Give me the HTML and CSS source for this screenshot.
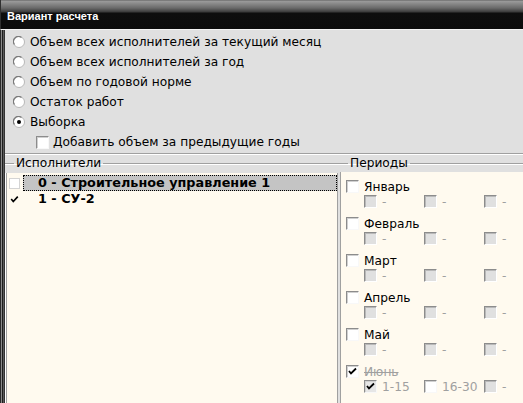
FILE: index.html
```
<!DOCTYPE html>
<html>
<head>
<meta charset="utf-8">
<link rel="stylesheet" href="styles.css">
</head>
<body>
<div class="win">
  <div class="titlebar"><span class="title">Вариант расчета</span></div>
  <div class="frame">
    <div class="edge"></div>
    <div class="client">
      <div class="options">
        <div class="opt"><svg class="radio" viewBox="0 0 12 12"><circle cx="6" cy="6" r="5.5" fill="#fff" stroke="#b8b8b8"/><path d="M1.5 8.5 A5 5 0 0 1 8.5 1.5" fill="none" stroke="#7a7a7a" stroke-width="1.2"/></svg><span>Объем всех исполнителей за текущий месяц</span></div>
        <div class="opt"><svg class="radio" viewBox="0 0 12 12"><circle cx="6" cy="6" r="5.5" fill="#fff" stroke="#b8b8b8"/><path d="M1.5 8.5 A5 5 0 0 1 8.5 1.5" fill="none" stroke="#7a7a7a" stroke-width="1.2"/></svg><span>Объем всех исполнителей за год</span></div>
        <div class="opt"><svg class="radio" viewBox="0 0 12 12"><circle cx="6" cy="6" r="5.5" fill="#fff" stroke="#b8b8b8"/><path d="M1.5 8.5 A5 5 0 0 1 8.5 1.5" fill="none" stroke="#7a7a7a" stroke-width="1.2"/></svg><span>Объем по годовой норме</span></div>
        <div class="opt"><svg class="radio" viewBox="0 0 12 12"><circle cx="6" cy="6" r="5.5" fill="#fff" stroke="#b8b8b8"/><path d="M1.5 8.5 A5 5 0 0 1 8.5 1.5" fill="none" stroke="#7a7a7a" stroke-width="1.2"/></svg><span>Остаток работ</span></div>
        <div class="opt"><svg class="radio" viewBox="0 0 12 12"><circle cx="6" cy="6" r="5.5" fill="#fff" stroke="#b8b8b8"/><path d="M1.5 8.5 A5 5 0 0 1 8.5 1.5" fill="none" stroke="#7a7a7a" stroke-width="1.2"/><circle cx="6" cy="6" r="2" fill="#000"/></svg><span>Выборка</span></div>
        <div class="opt sub"><span class="cb"></span><span>Добавить объем за предыдущие годы</span></div>
      </div>
      <div class="sep"></div>
      <div class="groups">
        <fieldset class="group left">
          <legend>Исполнители</legend>
          <div class="list">
            <div class="item"><span class="lcb"></span><span class="ltext sel">0 - Строительное управление 1</span></div>
            <div class="item"><span class="lcb plain"><svg viewBox="0 0 11 11"><path d="M1.5 5 L4 8 L9.5 2" fill="none" stroke="#000" stroke-width="2"/></svg></span><span class="ltext">1 - СУ-2</span></div>
          </div>
        </fieldset>
        <fieldset class="group right">
          <legend>Периоды</legend>
          <div class="periods">
            <div class="month"><div class="mrow"><span class="cb"></span><span>Январь</span></div><div class="srow"><div class="cell"><span class="cb dis"></span><span class="dash">-</span></div><div class="cell"><span class="cb dis"></span><span class="dash">-</span></div><div class="cell"><span class="cb dis"></span><span class="dash">-</span></div></div></div>
            <div class="month"><div class="mrow"><span class="cb"></span><span>Февраль</span></div><div class="srow"><div class="cell"><span class="cb dis"></span><span class="dash">-</span></div><div class="cell"><span class="cb dis"></span><span class="dash">-</span></div><div class="cell"><span class="cb dis"></span><span class="dash">-</span></div></div></div>
            <div class="month"><div class="mrow"><span class="cb"></span><span>Март</span></div><div class="srow"><div class="cell"><span class="cb dis"></span><span class="dash">-</span></div><div class="cell"><span class="cb dis"></span><span class="dash">-</span></div><div class="cell"><span class="cb dis"></span><span class="dash">-</span></div></div></div>
            <div class="month"><div class="mrow"><span class="cb"></span><span>Апрель</span></div><div class="srow"><div class="cell"><span class="cb dis"></span><span class="dash">-</span></div><div class="cell"><span class="cb dis"></span><span class="dash">-</span></div><div class="cell"><span class="cb dis"></span><span class="dash">-</span></div></div></div>
            <div class="month"><div class="mrow"><span class="cb"></span><span>Май</span></div><div class="srow"><div class="cell"><span class="cb dis"></span><span class="dash">-</span></div><div class="cell"><span class="cb dis"></span><span class="dash">-</span></div><div class="cell"><span class="cb dis"></span><span class="dash">-</span></div></div></div>
            <div class="month"><div class="mrow"><span class="cb"><svg viewBox="0 0 11 11"><path d="M2 5 L4 7.5 L9 2.5" fill="none" stroke="#000" stroke-width="1.8"/></svg></span><span class="struck">Июнь</span></div><div class="srow"><div class="cell"><span class="cb gray"><svg viewBox="0 0 11 11"><path d="M2 5 L4 7.5 L9 2.5" fill="none" stroke="#000" stroke-width="1.8"/></svg></span><span class="dash">1-15</span></div><div class="cell"><span class="cb"></span><span class="dash">16-30</span></div><div class="cell"><span class="cb dis"></span><span class="dash">-</span></div></div></div>
          </div>
        </fieldset>
      </div>
    </div>
  </div>
</div>
</body>
</html>
```
FILE: styles.css
```
html, body { margin: 0; padding: 0; }
body {
  width: 523px; height: 403px; overflow: hidden;
  background: #e0e0e0;
  font-family: "DejaVu Sans", sans-serif;
  font-size: 12.2px;
  color: #000;
}
.win { width: 523px; height: 403px; display: flex; flex-direction: column; }
.titlebar {
  flex: none;
  background: linear-gradient(#5a5a5a 0, #9c9c9c 1px, #6a6a6a 8px, #3a3a3a 12px, #0e0e0e 13px, #0c0c0c 29px);
  border-bottom: 1px solid #f4f4f4;
  border-left: 1px solid #303030;
  box-sizing: border-box;
  height: 30px;
  padding-left: 6px;
}
.title {
  display: block;
  font-family: "Liberation Sans", sans-serif;
  font-weight: bold; font-size: 11px; color: #fff;
  line-height: 13px; padding-top: 10px;
}
.frame { flex: 1; display: flex; min-height: 0; }
.edge {
  width: 5px; flex: none;
  background: linear-gradient(to right, #2a2a2a 0, #2a2a2a 1px, #8a8a8a 1px, #8a8a8a 2px, #1e1e1e 2px, #1e1e1e 3px, #5a5a5a 3px, #5a5a5a 4px, #333 4px);
}
.client { flex: 1; display: flex; flex-direction: column; min-width: 0; }
.options { padding-top: 2px; padding-left: 8px; }
.opt { height: 20px; display: flex; align-items: center; gap: 5px; white-space: nowrap; }
.radio { width: 12px; height: 12px; flex: none; }
.opt.sub { padding-left: 23px; gap: 4px; }
.cb {
  width: 13px; height: 13px; box-sizing: border-box; flex: none;
  background: #fff;
  border: 1px solid; border-color: #8c8c8c #f8f8f8 #f8f8f8 #8c8c8c;
  box-shadow: inset 1px 1px 0 #d0d0d0;
  display: flex; align-items: center; justify-content: center;
}
.cb svg { width: 11px; height: 11px; }
.cb.dis { background: #e0e0e0; border-color: #8c8c8c #ffffff #ffffff #8c8c8c; box-shadow: inset 1px 1px 0 #b8b8b8; }
.cb.gray { background: #e6e6e6; }
.sep { margin-top: 1px; height: 0; border-top: 1px solid #a0a0a0; border-bottom: 1px solid #fff; }
.groups { flex: 1; display: flex; min-height: 0; }
.group {
  margin: 0; padding: 0; min-width: 0;
  border: 0; border-top: 1px solid #a0a0a0;
  box-shadow: inset 0 1px 0 #fff;
  display: flex; flex-direction: column;
}
.group legend {
  font-size: 12.2px; line-height: 16px;
  padding: 0 2px; margin-left: 9px;
  color: #000;
}
.group.left { width: 333px; flex: none; }
.group.right { flex: 1; overflow: hidden; }
.group.right legend { margin-left: 10px; }
.list {
  flex: 1; margin-top: 2px;
  background: #fffaef;
  border-left: 1px solid #a0a0a0;
  box-shadow: -1px 0 0 #fff;
  margin-left: 1px;
  border-right: 1px solid #a0a0a0;
  padding-top: 2px;
}
.item { height: 16px; display: flex; align-items: center; }
.lcb {
  width: 11px; height: 11px; box-sizing: border-box; margin-left: 2px; margin-right: 3px;
  border: 1px solid #d4d4d4; background: #fff; flex: none;
  display: flex; align-items: center; justify-content: center;
}
.lcb.plain { border-color: #fffaef; background: transparent; }
.lcb svg { width: 11px; height: 11px; }
.ltext {
  flex: 1; height: 16px; box-sizing: border-box;
  padding-left: 14px; line-height: 14px;
  font-weight: bold; font-size: 12.8px; white-space: nowrap;
  border: 1px dotted transparent;
}
.ltext.sel { background: #c4c4c4; border-color: #000; }
.periods {
  flex: 1; margin-top: 1px;
  background: #fffaef;
  border-left: 1px solid #a0a0a0;
  margin-left: 2px;
  padding-top: 8px; padding-left: 5px;
  overflow: hidden;
}
.month { height: 37px; }
.mrow { height: 13px; display: flex; align-items: center; gap: 5px; }
.struck { color: #a0a0a0; text-decoration: line-through; }
.srow { display: flex; margin-top: 2px; padding-left: 18px; }
.cell { width: 60px; flex: none; height: 13px; display: flex; align-items: center; gap: 5px; }
.dash { color: #a0a0a0; }
```
